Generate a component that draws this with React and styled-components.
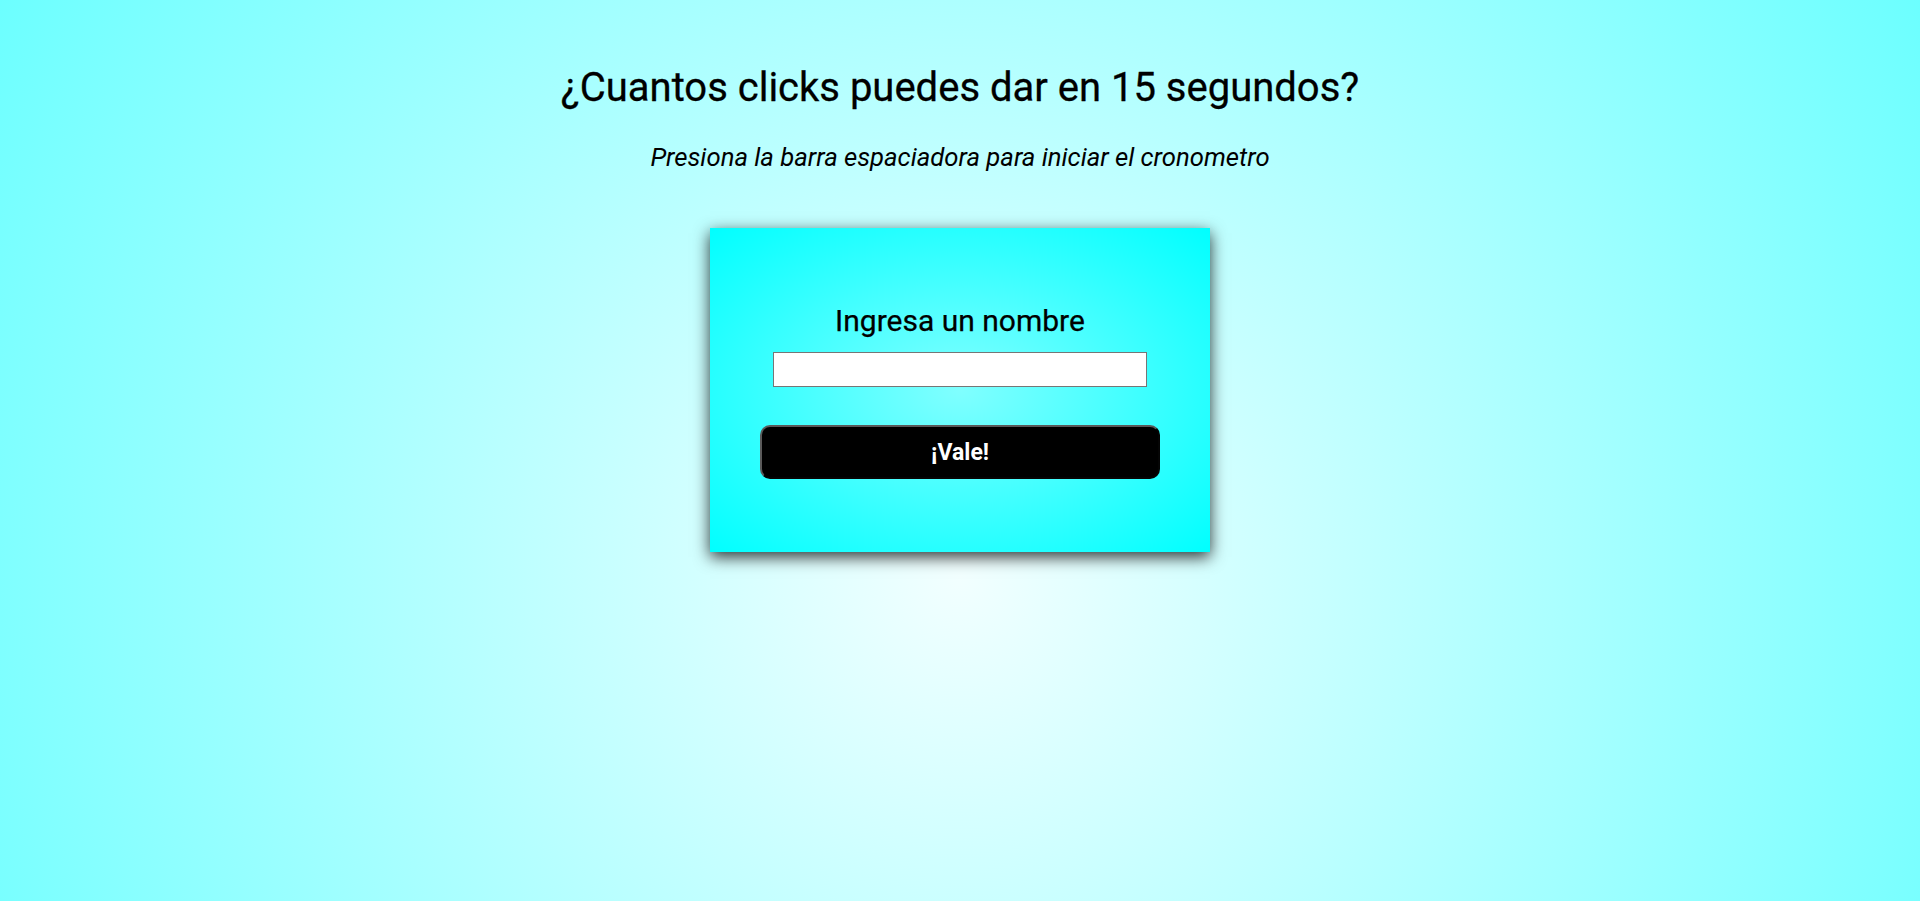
import React from "react";
import styled, { createGlobalStyle } from "styled-components";

const Global = createGlobalStyle`
  html, body {
    margin: 0;
    padding: 0;
  }
  body {
    min-height: 100vh;
    font-family: Roboto, "Liberation Sans", Arial, sans-serif;
    background: radial-gradient(circle farthest-corner at 50% 64%, #f2ffff 0%, #6cffff 100%) fixed;
  }
`;

const Page = styled.main`
  min-height: 100vh;
  display: flex;
  flex-direction: column;
  align-items: center;
  box-sizing: border-box;
  padding-top: 65px;
`;

const Title = styled.h1`
  margin: 0;
  font-size: 40px;
  font-weight: 400;
  line-height: 46px;
  color: #000;
  -webkit-text-stroke: 0.3px #000;
`;

const Subtitle = styled.p`
  margin: 31px 0 0;
  font-size: 25.7px;
  font-style: italic;
  line-height: 30px;
  color: #000;
`;

const Card = styled.section`
  margin-top: 56px;
  width: 500px;
  height: 324px;
  box-sizing: border-box;
  padding-top: 76px;
  display: flex;
  flex-direction: column;
  align-items: center;
  background: radial-gradient(ellipse farthest-corner at 50% 50%, #80ffff 0%, #00ffff 100%);
  box-shadow: 0 5px 15px rgba(0, 0, 0, 0.8);
`;

const Label = styled.h2`
  margin: 0;
  font-size: 30px;
  font-weight: 400;
  line-height: 34px;
  color: #000;
  -webkit-text-stroke: 0.25px #000;
`;

const NameInput = styled.input`
  margin-top: 14px;
  width: 374px;
  height: 35px;
  box-sizing: border-box;
  border: 1px solid #767676;
  background: #fff;
  padding: 0 4px;
  font-size: 16px;
  outline: none;
`;

const Button = styled.button`
  margin-top: 38px;
  width: 400px;
  height: 54px;
  box-sizing: border-box;
  background: #000;
  color: #fff;
  border: 2px outset #5a5a5a;
  border-radius: 10px;
  font-family: Roboto, "Liberation Sans", Arial, sans-serif;
  font-weight: 700;
  font-size: 23px;
  cursor: pointer;
`;

export default function App() {
  return (
    <>
      <Global />
      <Page>
        <Title>¿Cuantos clicks puedes dar en 15 segundos?</Title>
        <Subtitle>Presiona la barra espaciadora para iniciar el cronometro</Subtitle>
        <Card>
          <Label>Ingresa un nombre</Label>
          <NameInput type="text" />
          <Button>¡Vale!</Button>
        </Card>
      </Page>
    </>
  );
}
